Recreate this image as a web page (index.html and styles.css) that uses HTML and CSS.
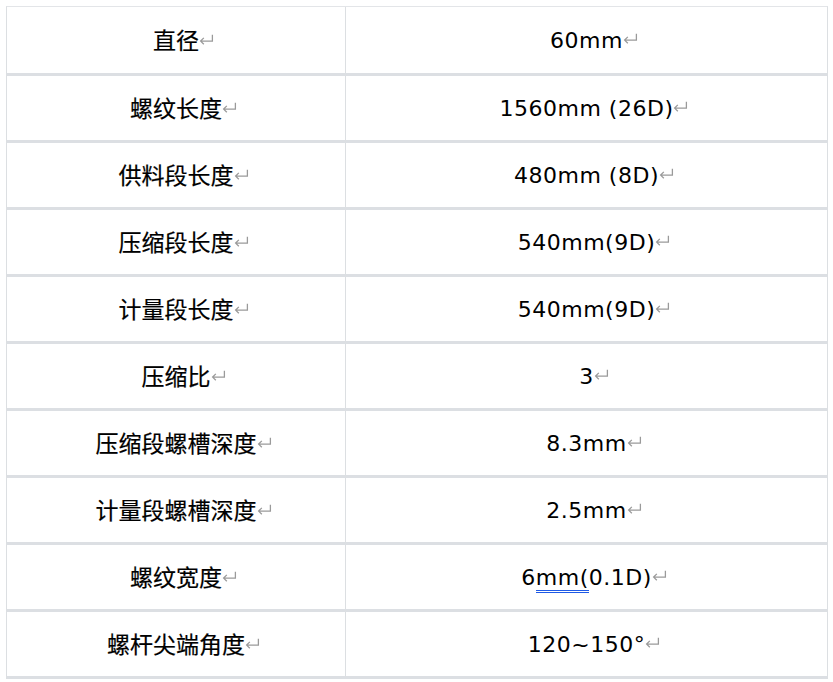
FILE: index.html
```html
<!DOCTYPE html>
<html lang="zh">
<head>
<meta charset="utf-8">
<link rel="stylesheet" href="styles.css">
</head>
<body>
<table class="spec">
  <tbody>
    <tr class="first"><td class="k">直径<svg class="ret" viewBox="0 0 14 10"><path d="M12.5 0.5V6.5H1.5M4.5 3.5L1.5 6.5L4.5 9.5"/></svg></td><td class="v">60mm<svg class="ret" viewBox="0 0 14 10"><path d="M12.5 0.5V6.5H1.5M4.5 3.5L1.5 6.5L4.5 9.5"/></svg></td></tr>
    <tr><td class="k">螺纹长度<svg class="ret" viewBox="0 0 14 10"><path d="M12.5 0.5V6.5H1.5M4.5 3.5L1.5 6.5L4.5 9.5"/></svg></td><td class="v">1560mm (26D)<svg class="ret" viewBox="0 0 14 10"><path d="M12.5 0.5V6.5H1.5M4.5 3.5L1.5 6.5L4.5 9.5"/></svg></td></tr>
    <tr><td class="k">供料段长度<svg class="ret" viewBox="0 0 14 10"><path d="M12.5 0.5V6.5H1.5M4.5 3.5L1.5 6.5L4.5 9.5"/></svg></td><td class="v">480mm (8D)<svg class="ret" viewBox="0 0 14 10"><path d="M12.5 0.5V6.5H1.5M4.5 3.5L1.5 6.5L4.5 9.5"/></svg></td></tr>
    <tr><td class="k">压缩段长度<svg class="ret" viewBox="0 0 14 10"><path d="M12.5 0.5V6.5H1.5M4.5 3.5L1.5 6.5L4.5 9.5"/></svg></td><td class="v">540mm(9D)<svg class="ret" viewBox="0 0 14 10"><path d="M12.5 0.5V6.5H1.5M4.5 3.5L1.5 6.5L4.5 9.5"/></svg></td></tr>
    <tr><td class="k">计量段长度<svg class="ret" viewBox="0 0 14 10"><path d="M12.5 0.5V6.5H1.5M4.5 3.5L1.5 6.5L4.5 9.5"/></svg></td><td class="v">540mm(9D)<svg class="ret" viewBox="0 0 14 10"><path d="M12.5 0.5V6.5H1.5M4.5 3.5L1.5 6.5L4.5 9.5"/></svg></td></tr>
    <tr><td class="k">压缩比<svg class="ret" viewBox="0 0 14 10"><path d="M12.5 0.5V6.5H1.5M4.5 3.5L1.5 6.5L4.5 9.5"/></svg></td><td class="v">3<svg class="ret" viewBox="0 0 14 10"><path d="M12.5 0.5V6.5H1.5M4.5 3.5L1.5 6.5L4.5 9.5"/></svg></td></tr>
    <tr><td class="k">压缩段螺槽深度<svg class="ret" viewBox="0 0 14 10"><path d="M12.5 0.5V6.5H1.5M4.5 3.5L1.5 6.5L4.5 9.5"/></svg></td><td class="v">8.3mm<svg class="ret" viewBox="0 0 14 10"><path d="M12.5 0.5V6.5H1.5M4.5 3.5L1.5 6.5L4.5 9.5"/></svg></td></tr>
    <tr><td class="k">计量段螺槽深度<svg class="ret" viewBox="0 0 14 10"><path d="M12.5 0.5V6.5H1.5M4.5 3.5L1.5 6.5L4.5 9.5"/></svg></td><td class="v">2.5mm<svg class="ret" viewBox="0 0 14 10"><path d="M12.5 0.5V6.5H1.5M4.5 3.5L1.5 6.5L4.5 9.5"/></svg></td></tr>
    <tr><td class="k">螺纹宽度<svg class="ret" viewBox="0 0 14 10"><path d="M12.5 0.5V6.5H1.5M4.5 3.5L1.5 6.5L4.5 9.5"/></svg></td><td class="v">6<span class="spell">mm(</span>0.1D)<svg class="ret" viewBox="0 0 14 10"><path d="M12.5 0.5V6.5H1.5M4.5 3.5L1.5 6.5L4.5 9.5"/></svg></td></tr>
    <tr><td class="k">螺杆尖端角度<svg class="ret" viewBox="0 0 14 10"><path d="M12.5 0.5V6.5H1.5M4.5 3.5L1.5 6.5L4.5 9.5"/></svg></td><td class="v">120~150°<svg class="ret" viewBox="0 0 14 10"><path d="M12.5 0.5V6.5H1.5M4.5 3.5L1.5 6.5L4.5 9.5"/></svg></td></tr>
  </tbody>
</table>
</body>
</html>
```

FILE: styles.css
```css
html, body {
  margin: 0;
  padding: 0;
  background: #ffffff;
}

body {
  padding: 6px 0 0 6px;
  font-family: "DejaVu Sans", "Noto Sans CJK SC", sans-serif;
  font-size: 22px;
  color: #000000;
}

.spec {
  border-collapse: separate;
  border-spacing: 0;
  width: 822px;
  border-top: 1px solid #e3e5e8;
  border-left: 1px solid #dcdfe2;
  border-right: 1px solid #dcdfe2;
}

.spec td {
  box-sizing: border-box;
  height: 67px;
  padding: 2px 0 0;
  text-align: center;
  vertical-align: middle;
  border-bottom: 3px solid #dcdfe3;
  white-space: nowrap;
  line-height: 1;
}

.spec tr.first td {
  height: 69px;
}

.spec td.k {
  width: 339px;
  border-right: 1px solid #dcdfe2;
  font-size: 23px;
  -webkit-text-stroke: 0.2px #000;
}

.spec td.v {
  letter-spacing: 0.5px;
}

.ret {
  width: 15px;
  height: 11px;
  margin-left: 0;
  margin-right: -15px;
  vertical-align: 4px;
}

.ret path {
  fill: none;
  stroke: #9a9a9a;
  stroke-width: 1.2;
}

.spell {
  border-bottom: 3px double #1f5ae6;
  line-height: 0.9;
}
```
